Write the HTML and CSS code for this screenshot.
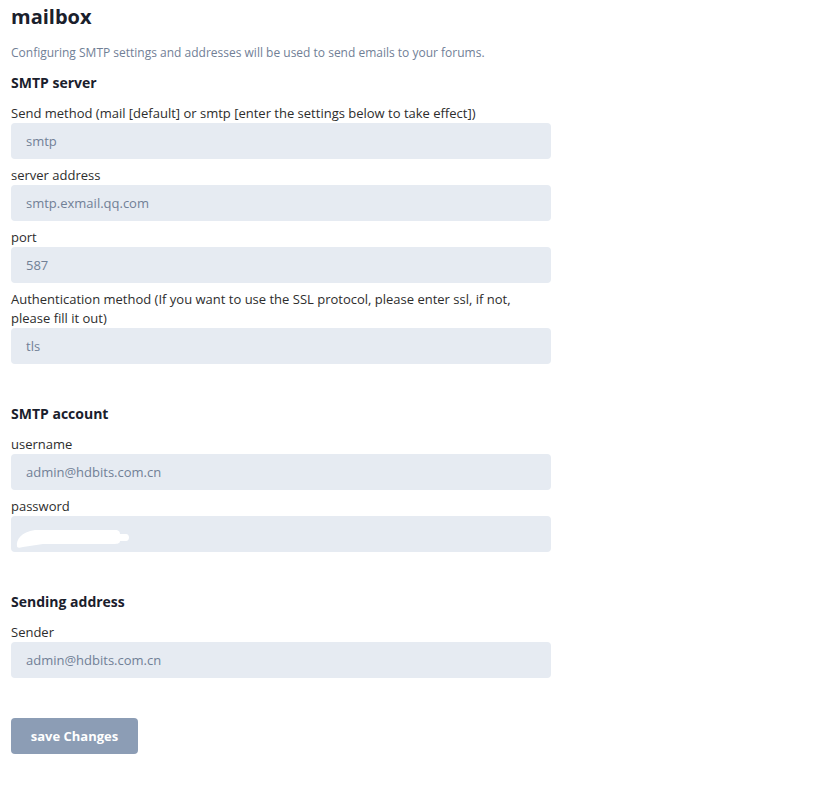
FILE: index.html
```html
<!DOCTYPE html>
<html>
<head>
<meta charset="utf-8">
<link rel="stylesheet" href="styles.css">
</head>
<body>
<div class="page">
  <h1 class="title">mailbox</h1>
  <p class="desc">Configuring SMTP settings and addresses will be used to send emails to your forums.</p>

  <section class="section">
    <h2 class="heading">SMTP server</h2>
    <div class="field">
      <label class="label">Send method (mail [default] or smtp [enter the settings below to take effect])</label>
      <div class="input">smtp</div>
    </div>
    <div class="field">
      <label class="label">server address</label>
      <div class="input">smtp.exmail.qq.com</div>
    </div>
    <div class="field">
      <label class="label">port</label>
      <div class="input">587</div>
    </div>
    <div class="field">
      <label class="label">Authentication method (If you want to use the SSL protocol, please enter ssl, if not, please fill it out)</label>
      <div class="input">tls</div>
    </div>
  </section>

  <section class="section">
    <h2 class="heading">SMTP account</h2>
    <div class="field">
      <label class="label">username</label>
      <div class="input">admin@hdbits.com.cn</div>
    </div>
    <div class="field">
      <label class="label">password</label>
      <div class="input input-pw">
        <svg class="smudge" width="124" height="36" viewBox="0 0 124 36"><path d="M4 30 C3 24 8 16 22 14 L102 14 C106 14 107 16 107 18 L113 18 C117 18 117 25 113 25 L107 25 C107 28 103 28 99 28 L30 28 L10 31 C6 32 4 32 4 30 Z" fill="#ffffff"/></svg>
      </div>
    </div>
  </section>

  <section class="section">
    <h2 class="heading">Sending address</h2>
    <div class="field">
      <label class="label">Sender</label>
      <div class="input">admin@hdbits.com.cn</div>
    </div>
  </section>

  <button class="btn">save Changes</button>
</div>
</body>
</html>
```

FILE: styles.css
```css
* { box-sizing: border-box; }
body {
  margin: 0;
  font-family: "Open Sans", "Noto Sans", sans-serif;
  background: #ffffff;
  color: #1a202c;
}
.page {
  padding: 3px 11px 40px 11px;
  width: 562px;
}
.title {
  margin: 0;
  font-size: 20px;
  line-height: 28px;
  font-weight: 700;
  color: #1a202c;
}
.desc {
  margin: 13px 0 0 0;
  font-size: 12px;
  line-height: 18px;
  color: #718096;
}
.section {
  margin-bottom: 40px;
}
.section:first-of-type .heading { margin-top: 11px; }
.heading {
  margin: 0 0 11px 0;
  font-size: 14px;
  line-height: 20px;
  font-weight: 700;
  color: #1a202c;
}
.field + .field { margin-top: 7px; }
.label {
  display: block;
  font-size: 13px;
  line-height: 19px;
  color: #2d2d2d;
}
.input {
  height: 36px;
  border-radius: 4px;
  background: #e6ebf2;
  padding: 0 15px;
  display: flex;
  align-items: center;
  font-size: 13px;
  color: #718096;
}
.input-pw { padding: 0 2px; }
.smudge { display: block; }
.btn {
  display: block;
  border: none;
  border-radius: 4px;
  background: #8c9db5;
  color: #ffffff;
  font-family: "Open Sans", "Noto Sans", sans-serif;
  font-size: 13px;
  font-weight: 700;
  height: 36px;
  width: 127px;
  padding: 0;
}
```
